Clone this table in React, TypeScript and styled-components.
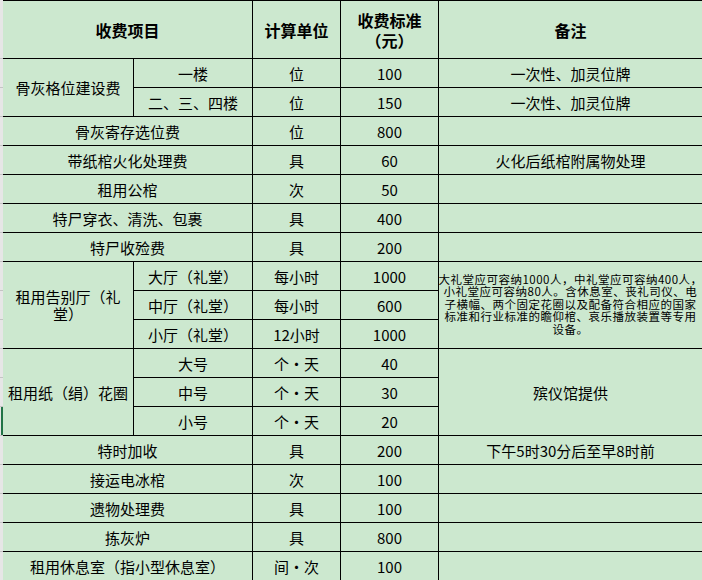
import React from 'react';
import styled, { createGlobalStyle } from 'styled-components';

const GlobalStyle = createGlobalStyle`
  html, body {
    margin: 0;
    padding: 0;
    background: #ffffff;
  }
  body {
    font-family: "Noto Sans CJK SC", "Liberation Sans", sans-serif;
    color: #000;
  }
`;

const Sheet = styled.div`
  display: flex;
  width: 702px;
  height: 580px;
  overflow: hidden;
  background: #cce8cf;
`;

const Gutter = styled.div`
  display: grid;
  grid-template-rows: 59px repeat(18, 29px);
  width: 3px;
  flex: none;
  background: #e6e6e6;
`;

const GutterCell = styled.div<{ $active?: boolean }>`
  box-sizing: border-box;
  border-bottom: 1px solid #c4c4c4;
  box-shadow: ${(p) => (p.$active ? 'inset -2px 0 #217346' : 'none')};
`;

const Grid = styled.div`
  display: grid;
  grid-template-columns: 131px 119px 88px 98px 264px;
  grid-template-rows: 58px repeat(18, 29px);
  border-top: 1px solid #000;
  flex: none;
`;

const Cell = styled.div<{
  $cols?: number;
  $rows?: number;
  $head?: boolean;
}>`
  box-sizing: border-box;
  grid-column: span ${(p) => p.$cols || 1};
  grid-row: span ${(p) => p.$rows || 1};
  border-right: 1px solid #000;
  border-bottom: 1px solid #000;
  display: flex;
  align-items: center;
  justify-content: center;
  text-align: center;
  padding: 0 4px;
  font-size: ${(p) => (p.$head ? '16px' : '15px')};
  font-weight: ${(p) => (p.$head ? 700 : 400)};
  line-height: ${(p) => (p.$head ? '20px' : '17px')};
  overflow: hidden;
`;

const NoteText = styled.div`
  display: flex;
  flex-direction: column;
  align-items: center;
  font-size: 11.5px;
  letter-spacing: 0.5px;
  line-height: 12.5px;
  white-space: nowrap;
  margin-top: -2px;
`;

const gutterRows = Array.from({ length: 19 }, (_, i) => i);

export default function App() {
  return (
    <>
      <GlobalStyle />
      <Sheet>
        <Gutter>
          {gutterRows.map((i) => (
            <GutterCell key={i} $active={i === 13} />
          ))}
        </Gutter>
        <Grid>
          <Cell $head $cols={2}>收费项目</Cell>
          <Cell $head>计算单位</Cell>
          <Cell $head>
            收费标准
            <br />
            （元）
          </Cell>
          <Cell $head>备注</Cell>

          <Cell $rows={2}>骨灰格位建设费</Cell>
          <Cell>一楼</Cell>
          <Cell>位</Cell>
          <Cell>100</Cell>
          <Cell>一次性、加灵位牌</Cell>
          <Cell>二、三、四楼</Cell>
          <Cell>位</Cell>
          <Cell>150</Cell>
          <Cell>一次性、加灵位牌</Cell>

          <Cell $cols={2}>骨灰寄存选位费</Cell>
          <Cell>位</Cell>
          <Cell>800</Cell>
          <Cell />

          <Cell $cols={2}>带纸棺火化处理费</Cell>
          <Cell>具</Cell>
          <Cell>60</Cell>
          <Cell>火化后纸棺附属物处理</Cell>

          <Cell $cols={2}>租用公棺</Cell>
          <Cell>次</Cell>
          <Cell>50</Cell>
          <Cell />

          <Cell $cols={2}>特尸穿衣、清洗、包裹</Cell>
          <Cell>具</Cell>
          <Cell>400</Cell>
          <Cell />

          <Cell $cols={2}>特尸收殓费</Cell>
          <Cell>具</Cell>
          <Cell>200</Cell>
          <Cell />

          <Cell $rows={3}>租用告别厅（礼堂）</Cell>
          <Cell>大厅（礼堂）</Cell>
          <Cell>每小时</Cell>
          <Cell>1000</Cell>
          <Cell $rows={3}>
            <NoteText>
              <span>大礼堂应可容纳1000人，中礼堂应可容纳400人，</span>
              <span>小礼堂应可容纳80人。含休息室、丧礼司仪、电</span>
              <span>子横幅、两个固定花圈以及配备符合相应的国家</span>
              <span>标准和行业标准的瞻仰棺、哀乐播放装置等专用</span>
              <span>设备。</span>
            </NoteText>
          </Cell>
          <Cell>中厅（礼堂）</Cell>
          <Cell>每小时</Cell>
          <Cell>600</Cell>
          <Cell>小厅（礼堂）</Cell>
          <Cell>12小时</Cell>
          <Cell>1000</Cell>

          <Cell $rows={3}>租用纸（绢）花圈</Cell>
          <Cell>大号</Cell>
          <Cell>个·天</Cell>
          <Cell>40</Cell>
          <Cell $rows={3}>殡仪馆提供</Cell>
          <Cell>中号</Cell>
          <Cell>个·天</Cell>
          <Cell>30</Cell>
          <Cell>小号</Cell>
          <Cell>个·天</Cell>
          <Cell>20</Cell>

          <Cell $cols={2}>特时加收</Cell>
          <Cell>具</Cell>
          <Cell>200</Cell>
          <Cell>下午5时30分后至早8时前</Cell>

          <Cell $cols={2}>接运电冰棺</Cell>
          <Cell>次</Cell>
          <Cell>100</Cell>
          <Cell />

          <Cell $cols={2}>遗物处理费</Cell>
          <Cell>具</Cell>
          <Cell>100</Cell>
          <Cell />

          <Cell $cols={2}>拣灰炉</Cell>
          <Cell>具</Cell>
          <Cell>800</Cell>
          <Cell />

          <Cell $cols={2}>租用休息室（指小型休息室）</Cell>
          <Cell>间·次</Cell>
          <Cell>100</Cell>
          <Cell />
        </Grid>
      </Sheet>
    </>
  );
}
